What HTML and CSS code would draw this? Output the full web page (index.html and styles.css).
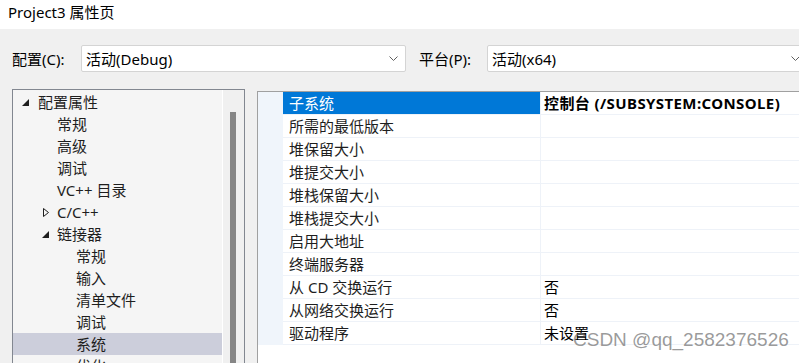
FILE: index.html
```html
<!DOCTYPE html>
<html lang="zh-CN">
<head>
<meta charset="UTF-8" />
<title>Project3 属性页</title>
<link rel="stylesheet" href="styles.css">
</head>
<body>
  <div class="title-bar">Project3 属性页</div>

  <div class="main">
    <div class="config-row">
      <span class="label label-config">配置(C):</span>
      <div class="combo combo-config">
        <span>活动(Debug)</span>
        <svg class="chevron" width="9" height="6" viewBox="0 0 9 6"><path d="M0.5 0.5 L4.5 4.5 L8.5 0.5" fill="none" stroke="#606060" stroke-width="1"/></svg>
      </div>
      <span class="label label-platform">平台(P):</span>
      <div class="combo combo-platform">
        <span>活动(x64)</span>
        <svg class="chevron" width="9" height="6" viewBox="0 0 9 6"><path d="M0.5 0.5 L4.5 4.5 L8.5 0.5" fill="none" stroke="#606060" stroke-width="1"/></svg>
      </div>
    </div>

    <div class="content">
      <div class="tree">
        <ul class="tree-list">
          <li class="node lvl0">
            <svg class="twist" width="7" height="7" viewBox="0 0 7 7"><polygon points="7,0 7,7 0,7" fill="#1e1e1e"/></svg>
            配置属性
          </li>
          <li class="node lvl1">常规</li>
          <li class="node lvl1">高级</li>
          <li class="node lvl1">调试</li>
          <li class="node lvl1">VC++ 目录</li>
          <li class="node lvl1">
            <svg class="twist collapsed" width="6" height="9" viewBox="0 0 6 9"><polygon points="0.5,0.5 5.5,4.5 0.5,8.5" fill="none" stroke="#1e1e1e" stroke-width="1"/></svg>
            C/C++
          </li>
          <li class="node lvl1">
            <svg class="twist" width="7" height="7" viewBox="0 0 7 7"><polygon points="7,0 7,7 0,7" fill="#1e1e1e"/></svg>
            链接器
          </li>
          <li class="node lvl2">常规</li>
          <li class="node lvl2">输入</li>
          <li class="node lvl2">清单文件</li>
          <li class="node lvl2">调试</li>
          <li class="node lvl2 selected">系统</li>
          <li class="node lvl2">优化</li>
        </ul>
        <div class="scrollbar"><div class="thumb"></div></div>
      </div>

      <div class="props">
        <div class="gutter"></div>
        <div class="rows">
          <div class="row active"><div class="name">子系统</div><div class="value bold">控制台 (/SUBSYSTEM:CONSOLE)</div></div>
          <div class="row"><div class="name">所需的最低版本</div><div class="value"></div></div>
          <div class="row"><div class="name">堆保留大小</div><div class="value"></div></div>
          <div class="row"><div class="name">堆提交大小</div><div class="value"></div></div>
          <div class="row"><div class="name">堆栈保留大小</div><div class="value"></div></div>
          <div class="row"><div class="name">堆栈提交大小</div><div class="value"></div></div>
          <div class="row"><div class="name">启用大地址</div><div class="value"></div></div>
          <div class="row"><div class="name">终端服务器</div><div class="value"></div></div>
          <div class="row"><div class="name">从 CD 交换运行</div><div class="value">否</div></div>
          <div class="row"><div class="name">从网络交换运行</div><div class="value">否</div></div>
          <div class="row"><div class="name">驱动程序</div><div class="value">未设置</div></div>
        </div>
      </div>
    </div>

    <div class="watermark">CSDN @qq_2582376526</div>
  </div>
</body>
</html>
```

FILE: styles.css
```css
html, body {
  margin: 0;
  padding: 0;
}

body {
  width: 799px;
  height: 363px;
  overflow: hidden;
  font-family: "Noto Sans", "Noto Sans CJK SC", sans-serif;
  font-size: 15px;
  color: #1e1e1e;
  background: #f0f0f0;
}

.title-bar {
  height: 29px;
  background: #fff;
  padding-left: 8px;
  line-height: 24px;
  color: #000;
}

.main {
  position: relative;
  height: 334px;
  background: #f0f0f0;
}

/* config / platform row */
.config-row {
  display: flex;
  align-items: center;
  padding: 16px 0 0 12px;
  height: 27px;
}

.label {
  color: #000;
  flex-shrink: 0;
}

.label-config {
  width: 69px;
}

.label-platform {
  width: 68px;
  margin-left: 13px;
}

.combo {
  box-sizing: border-box;
  height: 27px;
  background: #fff;
  border: 1px solid #d4d4d4;
  border-radius: 2px;
  display: flex;
  align-items: center;
  justify-content: space-between;
  padding: 0 7px 0 4px;
  flex-shrink: 0;
  color: #000;
}

.combo-config {
  width: 325px;
}

.combo-platform {
  width: 321px;
}

.chevron {
  display: block;
}

/* lower area */
.content {
  display: flex;
  align-items: flex-start;
  margin-top: 17px;
  padding-left: 12px;
}

.tree {
  display: flex;
  width: 231px;
  height: 280px;
  border: 1px solid #828790;
  border-bottom: none;
  background: #f5f5f5;
  flex-shrink: 0;
}

.tree-list {
  list-style: none;
  margin: 0;
  padding: 1px 0 0 0;
  width: 209px;
  border-right: 1px solid #fff;
  overflow: hidden;
}

.node {
  position: relative;
  height: 22px;
  line-height: 22px;
  white-space: nowrap;
}

.lvl0 { padding-left: 25px; }
.lvl1 { padding-left: 44px; }
.lvl2 { padding-left: 63px; }

.node.selected {
  background: #cccedb;
}

.twist {
  position: absolute;
  top: 8px;
  left: 9px;
}

.lvl1 .twist {
  left: 29px;
}

.twist.collapsed {
  top: 7px;
  left: 30px;
}

.scrollbar {
  width: 21px;
  background: #f0f0f0;
  position: relative;
}

.thumb {
  position: absolute;
  left: 7px;
  top: 22px;
  width: 6px;
  height: 260px;
  background: #868686;
}

/* property grid */
.props {
  display: flex;
  margin-left: 12px;
  margin-top: 2px;
  width: 560px;
  height: 280px;
  border-top: 1px solid #a0a0a0;
  border-left: 1px solid #a0a0a0;
  background: #fff;
  flex-shrink: 0;
}

.gutter {
  width: 25px;
  height: 253px;
  background: #f0f5fb;
}

.rows {
  width: 535px;
}

.row {
  display: flex;
  height: 23px;
  box-sizing: border-box;
  border-bottom: 1px solid #eef2f8;
  line-height: 22px;
}

.name {
  box-sizing: border-box;
  width: 258px;
  padding-left: 6px;
  border-right: 1px solid #eef2f8;
  color: #1e1e1e;
  white-space: nowrap;
}

.value {
  padding-left: 3px;
  color: #000;
  white-space: nowrap;
}

.bold {
  font-weight: 700;
  letter-spacing: 0.4px;
}

.row.active .name {
  background: #0078d7;
  color: #fff;
}

.watermark {
  position: absolute;
  left: 573px;
  top: 300px;
  font-family: "Liberation Sans", Arial, sans-serif;
  font-size: 19px;
  color: rgba(110, 110, 110, 0.7);
  white-space: nowrap;
}
```
